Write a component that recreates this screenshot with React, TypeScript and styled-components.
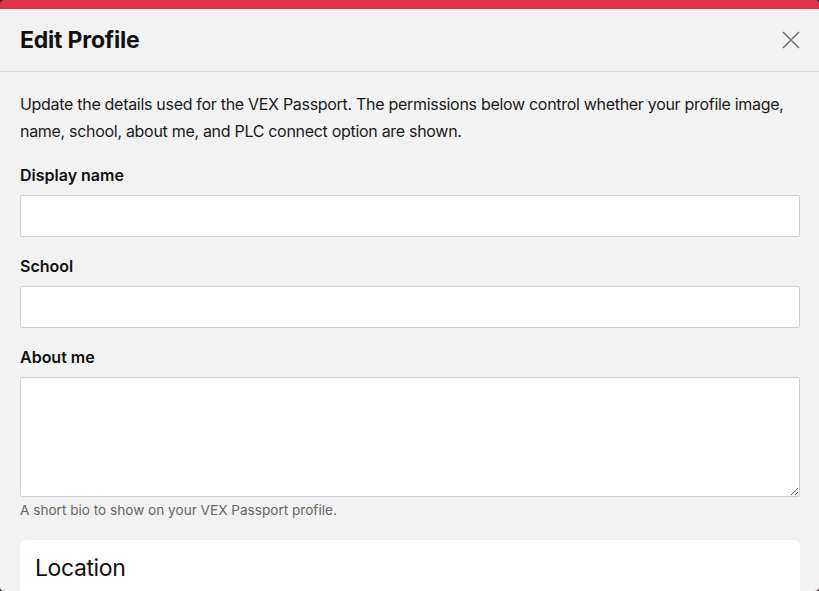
import React from 'react'
import styled, { createGlobalStyle } from 'styled-components'

const GlobalStyle = createGlobalStyle`
  html, body {
    margin: 0;
    padding: 0;
    background: #2a1a1d;
    font-family: Inter, "Noto Sans", "Liberation Sans", sans-serif;
    color: #111;
    overflow: hidden;
  }
  * {
    box-sizing: border-box;
  }
`

const Modal = styled.div`
  height: 100vh;
  background: #f2f2f2;
  border-top: 9px solid #e0344a;
  border-radius: 4px;
  display: flex;
  flex-direction: column;
  overflow: hidden;
`

const Header = styled.header`
  flex-shrink: 0;
  display: flex;
  align-items: center;
  justify-content: space-between;
  height: 63px;
  padding: 0 18px 1px 20px;
  border-bottom: 1px solid #dcdcdc;
`

const Title = styled.h1`
  margin: 0;
  font-size: 23px;
  font-weight: 700;
  letter-spacing: -0.2px;
`

const CloseButton = styled.button`
  border: 0;
  background: none;
  padding: 0;
  width: 20px;
  height: 20px;
  display: flex;
  align-items: center;
  justify-content: center;
  cursor: pointer;
  color: #777;
`

const Body = styled.div`
  flex-shrink: 0;
  padding: 19px 19px 0 20px;
`

const Intro = styled.p`
  margin: 0 0 18px;
  font-size: 16px;
  line-height: 27px;
  letter-spacing: -0.3px;
  color: #1a1a1a;
`

const Field = styled.div`
  & + & {
    margin-top: 17px;
  }
`

const Label = styled.label`
  display: block;
  font-size: 16px;
  font-weight: 600;
  line-height: 24px;
  margin-bottom: 8px;
`

const Input = styled.input`
  display: block;
  width: 100%;
  height: 42px;
  border: 1px solid #cfd3d9;
  border-radius: 2px;
  background: #fff;
  font: inherit;
  padding: 0 10px;
`

const TextArea = styled.textarea`
  display: block;
  width: 100%;
  height: 120px;
  border: 1px solid #cfd3d9;
  border-radius: 2px;
  background: #fff;
  font: inherit;
  padding: 8px 10px;
`

const Help = styled.div`
  margin-top: 3px;
  font-size: 13.6px;
  line-height: 21px;
  color: #666;
`

const Card = styled.section`
  margin-top: 19px;
  background: #fff;
  border-radius: 6px;
  padding: 14px 15px 20px;
`

const CardTitle = styled.h2`
  margin: 0;
  font-size: 23px;
  font-weight: 400;
  line-height: 29px;
  letter-spacing: -0.4px;
`

export default function App() {
  return (
    <>
      <GlobalStyle />
      <Modal>
        <Header>
          <Title>Edit Profile</Title>
          <CloseButton aria-label="Close">
            <svg width="18" height="18" viewBox="0 0 18 18">
              <path d="M1 1 L17 17 M17 1 L1 17" stroke="currentColor" strokeWidth="1.6" />
            </svg>
          </CloseButton>
        </Header>
        <Body>
          <Intro>
            Update the details used for the VEX Passport. The permissions below control whether your
            profile image, name, school, about me, and PLC connect option are shown.
          </Intro>
          <Field>
            <Label>Display name</Label>
            <Input />
          </Field>
          <Field>
            <Label>School</Label>
            <Input />
          </Field>
          <Field>
            <Label>About me</Label>
            <TextArea />
            <Help>A short bio to show on your VEX Passport profile.</Help>
          </Field>
          <Card>
            <CardTitle>Location</CardTitle>
          </Card>
        </Body>
      </Modal>
    </>
  )
}
